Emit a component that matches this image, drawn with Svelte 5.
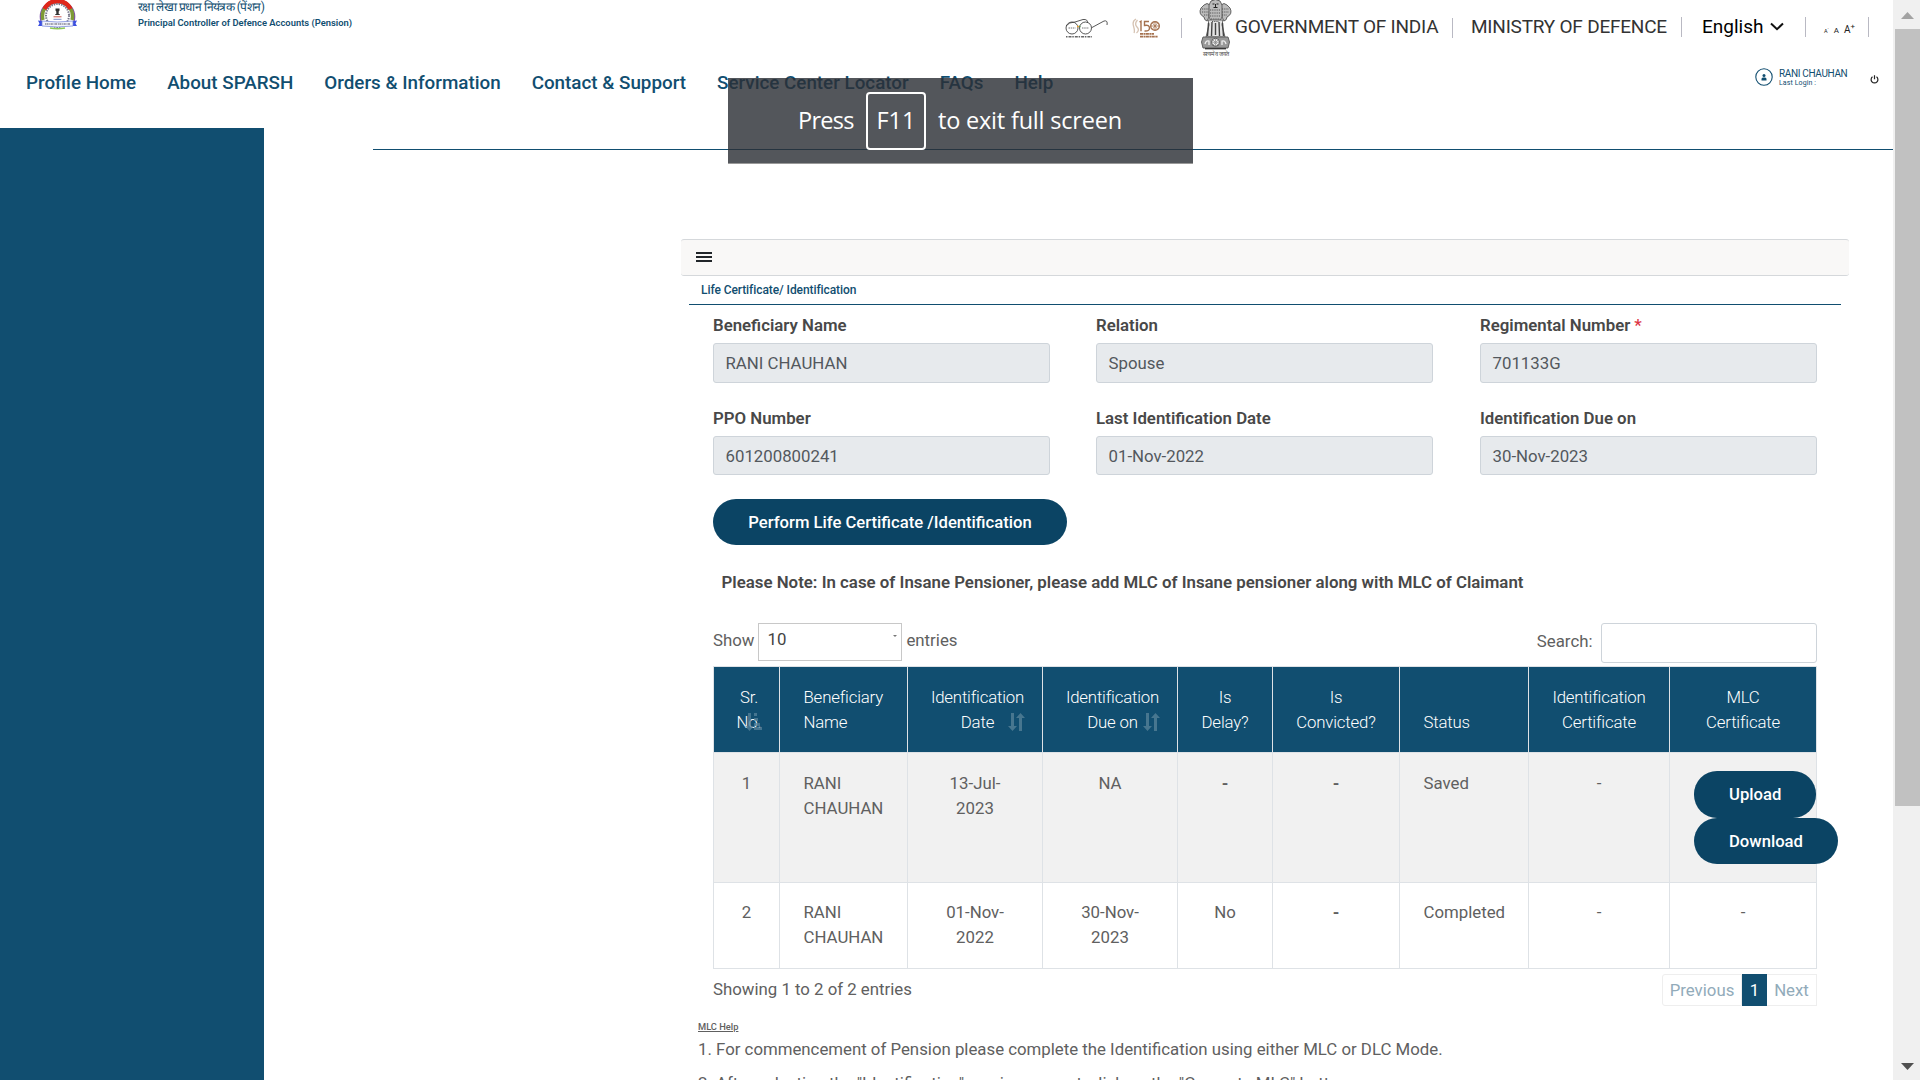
<script>
  const nav = ['Profile Home', 'About SPARSH', 'Orders & Information', 'Contact & Support', 'Service Center Locator', 'FAQs', 'Help'];
  const fields = [
    { label: 'Beneficiary Name', value: 'RANI CHAUHAN' },
    { label: 'Relation', value: 'Spouse' },
    { label: 'Regimental Number', value: '701133G', required: true },
    { label: 'PPO Number', value: '601200800241' },
    { label: 'Last Identification Date', value: '01-Nov-2022' },
    { label: 'Identification Due on', value: '30-Nov-2023' }
  ];
  const columns = [
    { lines: ['Sr.', 'No.'], width: 66, sort: 'asc' },
    { lines: ['Beneficiary', 'Name'], width: 128, left: true },
    { lines: ['Identification', 'Date'], width: 135, sort: 'both' },
    { lines: ['Identification', 'Due on'], width: 135, sort: 'both' },
    { lines: ['Is', 'Delay?'], width: 95 },
    { lines: ['Is', 'Convicted?'], width: 127 },
    { lines: ['Status'], width: 129, left: true },
    { lines: ['Identification', 'Certificate'], width: 141 },
    { lines: ['MLC', 'Certificate'], width: 147 }
  ];
  const rows = [
    ['1', 'RANI CHAUHAN', '13-Jul-2023', 'NA', '-', '-', 'Saved', '-', null],
    ['2', 'RANI CHAUHAN', '01-Nov-2022', '30-Nov-2023', 'No', '-', 'Completed', '-', '-']
  ];
</script>

<div class="page">
  <header>
    <div class="top">
      <svg class="logo" viewBox="0 0 39 30" width="39" height="30">
        <path d="M3 21A17 17 0 1 1 36 21" fill="none" stroke="#7f4fb0" stroke-width="1.500" />
        <path d="M5 20A15 15 0 1 1 34 20" fill="none" stroke="#7d9a35" stroke-width="3.500" />
        <path d="M6.500 9A14.700 14.700 0 0 1 32.500 9" fill="none" stroke="#e0261a" stroke-width="4.500" />
        <circle cx="19.500" cy="15.500" r="11.500" fill="#fff" stroke="#77778a" stroke-width="2" stroke-dasharray="1.500 1" />
        <path d="M17.500 8.500h4v2l-.8 1v2.500h1v1h-4.400v-1h1v-2.500l-.8-1z" fill="#333" />
        <path d="M15.500 16.800h8" stroke="#c9574e" />
        <path d="M15.500 19.300h8" stroke="#7e92c9" />
        <path d="M0 20.500l4 .5v5H0l1.500-2.500zM39 20.500l-4 .5v5h4l-1.500-2.500z" fill="#3c4fe0" />
        <path d="M4 21q15.500 2 31 0v5q-15.500 2-31 0z" fill="#f3f4fb" stroke="#6f7fd8" stroke-width=".7" />
        <path d="M7 24h25" stroke="#858595" stroke-width="1.500" stroke-dasharray="1 .5 2 .8" />
        <path d="M12 28q7.500 1.500 15 0" fill="none" stroke="#8fc955" stroke-width="1.700" />
      </svg>
      <div class="org">
        <div class="hindi">रक्षा लेखा प्रधान नियंत्रक (पेंशन)</div>
        <div class="office">Principal Controller of Defence Accounts (Pension)</div>
      </div>
      <svg class="glasses" viewBox="0 0 44 22" width="44" height="22">
        <g fill="none" stroke="#444" stroke-width=".9">
          <circle cx="7" cy="10" r="6" /><circle cx="20.500" cy="10" r="6" />
          <path d="M1 8Q4 4 10 4L18 1.500Q23 1 22.500 5M27 9.500L39 3Q43 2 42 7" />
          <path d="M3.500 10h7M17 10h7" stroke="#777" stroke-width="1.200" stroke-dasharray="1.500 .7" />
        </g>
        <path d="M12 8.500h2" stroke="#e8a13a" stroke-width="1.500" />
        <path d="M14 8.500h1.500" stroke="#4f9a52" stroke-width="1.500" />
        <path d="M1 18.800h26" stroke="#666" stroke-width="1.400" stroke-dasharray="1.500 1 3 .8" />
      </svg>
      <svg class="anniv" viewBox="0 0 28 21" width="28" height="21">
        <g fill="none" stroke="#a5714e" stroke-width="1.400">
          <path d="M7.500 4l1.500-.8v10M17 3.500h-4.500v4q5-1 5 2.500t-5 3" />
          <circle cx="23" cy="8" r="4.300" /><path d="M23 4v8M19 8h8M20.500 5l5 6M25.500 5l-5 6" stroke-width=".8" />
          <path d="M8 15.800h14M8 18.700h18" stroke-dasharray="3 .5 2 .4" stroke-width="1.700" />
        </g>
        <path d="M4 1Q0 3 1.500 8T2 15M5.500 2Q2 6 5 9T4.500 15" fill="none" stroke="#d6c3b3" stroke-width="1.300" />
      </svg>
      <i class="sep s1"></i>
      <svg class="emblem" viewBox="0 0 33 57" width="33" height="57">
        <g fill="#bbb" stroke="#555" stroke-width=".9">
          <path d="M5 5Q8 2 11 5L10 17 8 21Q5 20 5 17-1 14 2 8ZM28 5Q25 2 22 5L23 17 25 21Q28 20 28 17 34 14 31 8Z" />
          <path d="M12 1Q16.500-2 21 1L23 5 23 17 20 23H13L10 17V5Z" />
          <path d="M9 20h15l-1 5 3 12H7l3-12z" fill="#e4e4e4" />
          <path d="M4 37h25l1.500 5-1.500 6H4l-1.500-6z" fill="#999" />
        </g>
        <g stroke="#555" fill="none">
          <path d="M3 9h7M3 12h7M5 15h5M23 9h7M23 12h7M23 15h5M11 10h11M11 13h11M11 16h11M12 19h9M13 21.500h7" stroke-dasharray="1.200 1" />
          <path d="M9.500 23l-1 13M13 22l-.5 14M20 22l.5 14M23.500 23l1 13M16.500 23v12" stroke="#444" stroke-width="1.400" />
        </g>
        <path d="M13.500 4h2M17.500 4h2M14.500 7.500h4M16.500 4v3" stroke="#222" stroke-width="1" />
        <circle cx="16.500" cy="42.300" r="4" fill="#eee" stroke="#555" /><path d="M13 42.300h7M16.500 39v7M14 40l5 5M19 40l-5 5" stroke="#888" stroke-width=".7" />
        <path d="M6 44q1-4 4-3v4M27 44q-1-4-4-3v4" fill="none" stroke="#eee" stroke-width="1.300" />
        <path d="M6 48.700h21" stroke="#333" stroke-width="1.300" />
        <text x="3.500" y="56" font-size="6" textLength="26" lengthAdjust="spacingAndGlyphs" fill="#444">सत्यमेव जयते</text>
      </svg>
      <span class="gov g1">GOVERNMENT OF INDIA</span>
      <i class="sep s2"></i>
      <span class="gov g2">MINISTRY OF DEFENCE</span>
      <i class="sep s3"></i>
      <span class="lang">English</span>
      <svg class="chev" viewBox="0 0 14 9" width="14" height="9"><path d="M1 1.500l6 5.700 6-5.700" fill="none" stroke="#111" stroke-width="2" /></svg>
      <i class="sep s4"></i>
      <span class="sizes"><span class="a1">A<sup>-</sup></span><span class="a2">A</span><span class="a3">A<sup>+</sup></span></span>
      <i class="sep s5"></i>
    </div>
    <div class="bar">
      <nav>{#each nav as item}<a href="#top">{item}</a>{/each}</nav>
      <svg class="user" viewBox="0 0 18 18" width="18" height="18"><circle cx="9" cy="9" r="8.200" fill="none" stroke="#114e70" stroke-width="1.100" /><circle cx="9" cy="7.500" r="1.500" fill="#114e70" /><path d="M6.500 12.500V11q0-1.500 1.500-1.500h2q1.500 0 1.500 1.500v1.500z" fill="#114e70" /></svg>
      <div class="who"><div class="name">RANI CHAUHAN</div><div class="last">Last Login :</div></div>
      <svg class="power" viewBox="0 0 9 9" width="9" height="9"><path d="M2.500 1.800a3.400 3.400 0 1 0 4 0M4.500 .3v4" fill="none" stroke="#222" stroke-width="1.200" /></svg>
    </div>
  </header>

  <div class="body">
    <aside></aside>
    <div class="content">
      <hr />
      <main>
        <div class="toolbar"><svg viewBox="0 0 16 10" width="16" height="10"><path d="M0 1h16M0 5h16M0 9h16" stroke="#212529" stroke-width="2" /></svg></div>
        <div class="crumb">Life Certificate/ Identification</div>
        <section>
          <div class="fields">
            {#each fields as f}
              <div class="field"><label>{f.label}{#if f.required}<b>*</b>{/if}<span class="value">{f.value}</span></label></div>
            {/each}
          </div>
          <button class="perform">Perform Life Certificate /Identification</button>
          <p class="note">Please Note: In case of Insane Pensioner, please add MLC of Insane pensioner along with MLC of Claimant</p>
          <div class="controls">
            <span>Show</span>
            <div class="select">10<svg viewBox="0 0 4 2" width="4" height="2"><path d="M0 0h4L2 2z" fill="#777" /></svg></div>
            <span>entries</span>
            <span class="search">Search:</span><div class="input"></div>
          </div>
          <table>
            <colgroup>{#each columns as c}<col style="width:{c.width}px" />{/each}</colgroup>
            <thead>
              <tr>
                {#each columns as c}
                  <th class:left={c.left} class:sortable={c.sort}>
                    {#each c.lines as line}<div>{line}</div>{/each}
                    {#if c.sort === 'both'}
                      <svg class="sort" viewBox="0 0 17 18" width="17" height="18"><path d="M3 0h3v13h3l-4.500 5L0 13h3zM11 18h3V5h3l-4.500-5L8 5h3z" fill="#47768f" /></svg>
                    {:else if c.sort}
                      <svg class="sort one" viewBox="0 0 17 18" width="17" height="18"><path d="M3 0h3v13h3l-4.500 5L0 13h3zM9 0h3v3H9zM9 5h4v3H9zM9 10h6v3H9zM9 14h8v3H9z" fill="#57839b" /></svg>
                    {/if}
                  </th>
                {/each}
              </tr>
            </thead>
            <tbody>
              {#each rows as row}
                <tr>
                  {#each row as cell, i}
                    <td class:left={columns[i].left} class:date={i === 2 || i === 3} class:strong={(i === 4 || i === 5) && cell === '-'}>
                      {#if cell === null}
                        <div class="actions"><button>Upload</button><button>Download</button></div>
                      {:else}{cell}{/if}
                    </td>
                  {/each}
                </tr>
              {/each}
            </tbody>
          </table>
          <div class="foot">
            <span>Showing 1 to 2 of 2 entries</span>
            <div class="pages"><span class="prev">Previous</span><span class="cur">1</span><span class="next">Next</span></div>
          </div>
        </section>
        <div class="help">
          <h6>MLC Help</h6>
          <p>1. For commencement of Pension please complete the Identification using either MLC or DLC Mode.</p>
          <p>2. After selecting the "Identification" service request, click on the "Generate MLC" button.</p>
        </div>
      </main>
    </div>
  </div>

  <div class="scroll">
    <svg viewBox="0 0 13 7" width="13" height="7"><path d="M0 7l6.500-7L13 7z" fill="#a3a3a3" /></svg>
    <div class="thumb"></div>
    <svg class="down" viewBox="0 0 13 7" width="13" height="7"><path d="M0 0l6.500 7L13 0z" fill="#505050" /></svg>
  </div>

  <div class="toast"><span class="press">Press</span><span class="key">F11</span><span class="exit">to exit full screen</span></div>
</div>

<style>
  :global(body) { margin: 0; overflow: hidden; background: #fff; }
  * { box-sizing: border-box; }
  .page { position: relative; width: 1920px; height: 1080px; overflow: hidden; font: 16.810px/25px Roboto, sans-serif; color: #606060; }
  svg { display: block; flex: none; }
  header { height: 128px; color: #114e70; }
  .top { height: 60px; display: flex; align-items: flex-start; white-space: nowrap; }
  .logo { margin-left: 38px; }
  .org { width: 250px; margin-left: 61px; }
  .hindi { font-size: 12px; letter-spacing: -.540px; line-height: 14px; height: 16px; }
  .office { font-size: 9.380px; font-weight: 600; line-height: 14px; }
  .glasses { margin: 18px 0 0 677px; }
  .anniv { margin: 18px 0 0 23px; }
  .sep { width: 1px; height: 20px; margin-top: 18px; background: #b9b9c3; flex: none; }
  .s1 { margin-left: 21px; }
  .emblem { margin-left: 17px; margin-right: 1px; }
  .gov { color: #333; font-size: 19px; letter-spacing: -.220px; line-height: 24px; margin-top: 15px; flex: none; }
  .g1 { width: 203px; margin-left: 2px; }
  .s2 { margin-left: 14px; }
  .g2 { width: 197px; margin-left: 18px; }
  .s3 { margin: 17px 0 0 13px; }
  .lang { width: 61px; margin: 15px 0 0 20px; font-size: 19px; line-height: 24px; color: #000; flex: none; }
  .chev { margin: 22px 0 0 7px; }
  .s4 { margin: 17px 0 0 21px; }
  .sizes { width: 32px; margin: 22px 0 0 18px; display: flex; gap: 5px; align-items: baseline; color: #222; line-height: 16px; }
  .sizes sup { font-size: .8em; line-height: 0; }
  .a1 { font-size: 5.500px; } .a2 { font-size: 8px; } .a3 { font-size: 10px; }
  .s5 { margin: 17px 0 0 12px; }
  .bar { height: 44px; display: flex; align-items: center; }
  nav { display: flex; gap: 31px; padding: 2px 0 0 26px; width: 1755px; }
  nav a { color: #114e70; text-decoration: none; font-size: 18.820px; font-weight: 500; white-space: nowrap; }
  .user { margin-top: -10px; }
  .who { width: 91px; margin: -8px 0 0 6px; line-height: 9px; }
  .name { font-size: 10px; letter-spacing: -.350px; line-height: 11px; white-space: nowrap; }
  .last { font-size: 7px; line-height: 9px; letter-spacing: .1px; }
  .power { margin-top: -5px; }
  .body { display: flex; height: 952px; }
  aside { width: 264px; background: #114e70; }
  .content { width: 1629px; }
  hr { height: 1px; border: 0; margin: 21px 0 89px 109px; background: #114e70; }
  main { margin-left: 417px; width: 1168px; }
  .toolbar { height: 37px; border: 1px solid #d5d8db; border-width: 1px 0; border-radius: 3px; background: #f9f8f7; padding: 12px 0 0 15px; }
  .crumb { margin: 0 8px; height: 29px; padding-left: 12px; border-bottom: 1px solid #114e70; font-size: 12px; letter-spacing: -.080px; line-height: 28px; font-weight: 500; color: #114e70; }
  section { padding: 6px 32px 0; }
  .fields { display: grid; grid-template-columns: 383px 384px 337px; }
  .field { height: 93px; }
  .field label { display: block; width: 337px; font-weight: 600; color: #484848; line-height: 27px; height: 31px; padding-top: 1px; }
  .field b { margin-left: 4px; color: #dc3545; font-weight: 500; }
  .value { display: block; height: 40px; margin-top: 4px; padding: 0 11.500px; border: 1px solid #ced4da; border-radius: 3px; background: #e7eaed; color: #53585d; font-weight: 400; line-height: 39px; }
  .field:nth-child(n + 4) .value { height: 39px; }
  button { display: block; height: 46px; border: 0; border-radius: 23px; background: #0b4464; color: #fff; font: 500 16.650px Roboto, sans-serif; padding: 0 35px; white-space: nowrap; }
  .perform { width: 354px; margin-top: 2px; }
  .note { margin: 25px 0 0 8.500px; font-weight: 600; color: #484848; font-size: 16.850px; white-space: nowrap; }
  .controls { height: 43px; margin-top: 28px; display: flex; align-items: flex-start; }
  .controls > span { line-height: 34px; }
  .select { position: relative; width: 144px; height: 38px; margin: 0 4px; border: 1px solid #c8c8c8; padding-left: 8px; line-height: 31px; color: #444; }
  .select svg { position: absolute; right: 4px; top: 11px; }
  .controls .search { margin-left: auto; line-height: 36px; }
  .input { width: 216px; height: 40px; margin-left: 8.500px; border: 1px solid #ced4da; border-radius: 3px; }
  table { width: 1104px; table-layout: fixed; border-collapse: collapse; }
  th, td { border: 1px solid #dee2e6; padding: 18px 22px 0; text-align: center; vertical-align: top; }
  th { position: relative; height: 86px; background: #114e70; color: #fff; font-weight: 300; letter-spacing: -.180px; vertical-align: bottom; padding: 0 10px 17px; }
  .left { text-align: left; padding-left: 23.500px; }
  .sortable { padding-left: 15px; }
  .sort { position: absolute; right: 17px; bottom: 21px; }
  .one { right: 17px; opacity: .75; }
  td { height: 86px; }
  td.date { padding-left: 30px; padding-right: 30px; }
  tbody tr:first-child td { height: 130px; background: #f1f1f1; }
  tbody tr:last-child td { padding-top: 17px; }
  .strong { font-weight: 700; }
  .actions { position: relative; width: 144px; margin-left: 2px; }
  .actions button:first-child { height: 47px; }
  .foot { display: flex; justify-content: space-between; padding-top: 5px; }
  .foot > span { line-height: 31px; }
  .pages { display: flex; height: 32px; line-height: 30px; color: #92abba; text-align: center; }
  .prev { width: 80px; border: 1px solid #eee; border-radius: 3px 0 0 3px; }
  .cur { width: 25px; background: #114e70; color: #fff; line-height: 32px; }
  .next { width: 50px; border: 1px solid #eee; border-left: 0; }
  .help { margin-left: 17px; }
  h6 { margin: 13px 0 0; font-size: 9.300px; line-height: 16px; font-weight: 500; text-decoration: underline; }
  .help p { margin: 0 0 9px; padding-top: 2px; white-space: nowrap; height: 25px; }
  .scroll { position: absolute; right: 0; top: 0; width: 27px; height: 1080px; background: #f0f0f0; padding-top: 12px; }
  .scroll svg { margin-left: 8px; }
  .thumb { margin: 10px 0 257px 2px; height: 777px; background: #c1c1c1; }
  .toast { position: absolute; left: 728px; top: 78px; width: 465px; height: 86px; padding: 14px 0 0 70px; display: flex; background: rgba(43, 47, 53, .81); border-bottom: 1px solid #999; color: #fff; font: 23.500px/54px "Open Sans", sans-serif; white-space: nowrap; }
  .press { width: 68px; letter-spacing: -.7px; padding-top: 1px; }
  .key { width: 60px; height: 58px; border: 2px solid #fff; border-radius: 4px; text-align: center; line-height: 52px; }
  .exit { margin-left: 12px; letter-spacing: -.2px; padding-top: 1px; }
</style>
